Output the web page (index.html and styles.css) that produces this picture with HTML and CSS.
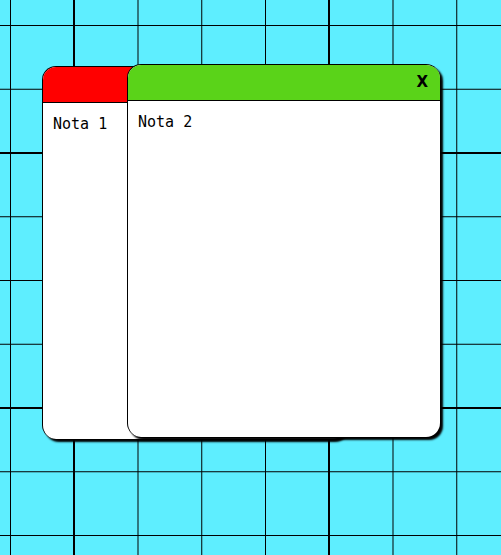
FILE: index.html
```html
<!DOCTYPE html>
<html lang="es">
<head>
	<meta charset="UTF-8">
	<title>Notas</title>
	<link rel="stylesheet" href="styles.css">
</head>
<body>
	<div class="desk">
		<div class="note note1">
			<div class="note-bar red"></div>
			<div class="note-text">Nota 1</div>
		</div>
		<div class="note note2">
			<div class="note-bar green">
				<span class="close">X</span>
			</div>
			<div class="note-text">Nota 2</div>
		</div>
	</div>
</body>
</html>
```
FILE: styles.css
```css
*{
	margin: 0;
	padding: 0;
}
html,
body{
	height: 100%;
}
body{
	background-color: #5eeeff;
	/* lineas gruesas cada 255px, finas cada 63.75px */
	background-image:
		linear-gradient(to right, #000 2px, transparent 2px),
		linear-gradient(to bottom, #000 2px, transparent 2px),
		linear-gradient(to right, #000 1px, transparent 1px),
		linear-gradient(to bottom, #000 1px, transparent 1px);
	background-size:
		255px 255px,
		255px 255px,
		63.75px 63.75px,
		63.75px 63.75px;
	background-position:
		73px 0,
		0 152px,
		10px 0,
		0 25px;
	font-family: "DejaVu Sans Mono", monospace;
	overflow: hidden;
}
.desk{
	position: relative;
	width: 100%;
	height: 100%;
}
.note{
	position: absolute;
	height: 372px;
	background: #fff;
	border-top: 1px solid #000;
	border-left: 1px solid #000;
	border-radius: 14px;
	box-shadow: 3px 3px 2px #000;
	overflow: hidden;
	display: flex;
	flex-direction: column;
}
.note1{
	left: 42px;
	top: 66px;
	width: 303px;
}
.note2{
	left: 127px;
	top: 64px;
	width: 312px;
}
.note-bar{
	height: 35px;
	border-bottom: 1px solid #000;
	display: flex;
	align-items: center;
	justify-content: flex-end;
	padding-right: 12px;
}
.red{
	background: #ff0000;
}
.green{
	background: #5ad319;
}
.close{
	font-family: "DejaVu Sans", sans-serif;
	font-size: 15px;
	font-weight: bold;
	line-height: 1;
	color: #000;
	cursor: pointer;
}
.note-text{
	padding: 12px 10px;
	font-size: 15px;
	color: #000;
}
```
